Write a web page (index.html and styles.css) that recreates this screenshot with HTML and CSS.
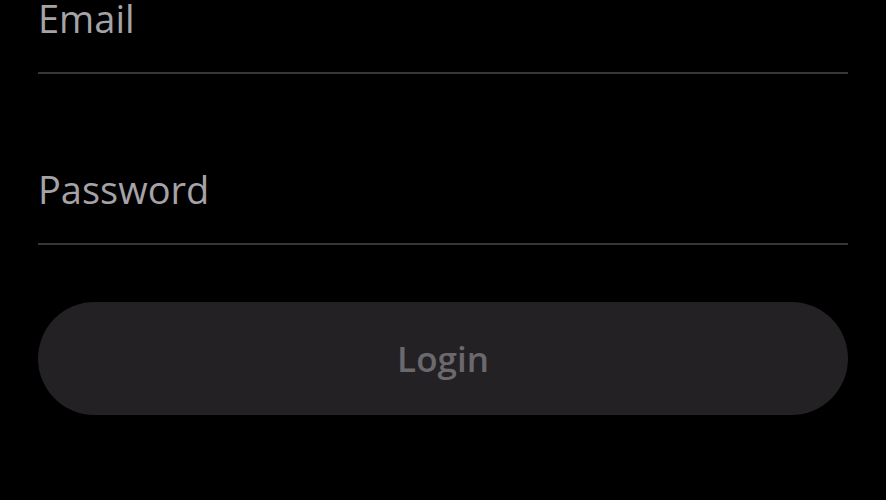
FILE: index.html
```html
<!doctype html>
<html lang="en">
<head>
  <meta charset="UTF-8" />
  <meta name="viewport" content="width=device-width, initial-scale=1" />
  <title>Login</title>
  <link rel="stylesheet" href="styles.css">
</head>
<body>
  <form class="login-form" onsubmit="return false">
    <div class="field">
      <input type="email" placeholder="Email" />
    </div>
    <div class="field field-password">
      <input type="password" placeholder="Password" />
    </div>
    <button type="submit" class="login-btn" disabled>Login</button>
  </form>
</body>
</html>
```

FILE: styles.css
```css
html, body {
  margin: 0;
  padding: 0;
  background: #000;
  height: 100%;
  overflow: hidden;
}
body {
  padding: 0 38px;
  font-family: 'Open Sans', 'Noto Sans', sans-serif;
}
.login-form {
  display: flex;
  flex-direction: column;
  margin-top: -8px;
}
.field {
  padding-bottom: 28px;
  border-bottom: 2px solid #37353a;
}
.field-password {
  margin-top: 89px;
}
.field input {
  display: block;
  width: 100%;
  box-sizing: border-box;
  margin: 0;
  padding: 0;
  border: none;
  outline: none;
  background: transparent;
  font-family: inherit;
  font-size: 38px;
  line-height: 52px;
  height: 52px;
  color: #a5a3a8;
}
.field input::placeholder {
  color: #a5a3a8;
  opacity: 1;
}
.login-btn {
  margin-top: 57px;
  height: 113px;
  border: none;
  border-radius: 57px;
  background: #232124;
  color: #6b696e;
  font-family: inherit;
  font-size: 35px;
  font-weight: 600;
  padding: 0;
}
```
